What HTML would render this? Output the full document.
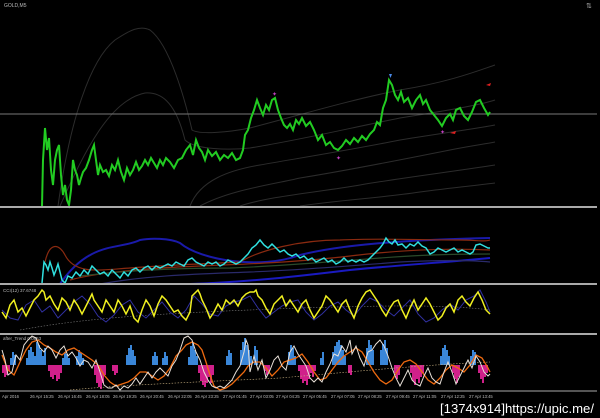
<!DOCTYPE html>
<html><head><meta charset="utf-8"><style>
html,body{margin:0;padding:0;background:#000;width:600px;height:418px;overflow:hidden}
svg{display:block}
text{font-family:"Liberation Sans",sans-serif}
</style></head><body>
<svg width="600" height="418" viewBox="0 0 600 418" xmlns="http://www.w3.org/2000/svg">
<rect width="600" height="418" fill="#000"/>
<text x="4" y="7" font-size="5" fill="#bbb">GOLD,M5</text>
<text x="586" y="8" font-size="7" fill="#aaa">⇅</text>
<g fill="none" stroke="#2c2c2c" stroke-width="1">
<path d="M58,206 C70,120 90,60 115,40 C130,30 140,25 150,30 C170,45 185,100 192,130 C200,135 230,132 250,128 C300,115 350,100 400,90 C450,82 480,70 495,65"/>
<path d="M60,206 C85,150 110,100 145,93 C160,92 175,100 185,140 C195,150 230,150 250,148 C300,140 350,128 400,118 C450,110 480,105 495,100"/>
<path d="M190,206 C200,180 230,170 260,165 C300,158 350,150 400,140 C450,132 480,128 495,125"/>
<path d="M200,206 C230,190 270,185 300,178 C350,170 400,160 450,150 C470,146 485,144 495,142"/>
<path d="M240,206 C270,196 320,192 360,185 C400,178 450,172 495,165"/>
<path d="M300,206 C340,200 380,198 420,192 C450,188 480,185 495,183"/>
</g>
<line x1="0" y1="114" x2="597" y2="114" stroke="#777" stroke-width="1"/>
<polyline fill="none" stroke="#22cc22" stroke-width="2" points="42,206 43,160 45,128 47,150 49,138 51,170 53,185 55,160 57,150 59,145 61,175 63,195 65,185 67,200 69,205 71,190 73,160 75,170 77,175 79,185 81,178 83,172 86,168 89,160 92,150 94,145 96,160 98,175 100,165 103,172 106,170 109,176 112,165 115,170 118,160 121,172 124,180 127,168 130,175 133,170 136,162 139,170 142,166 145,160 148,165 151,158 154,163 157,168 160,160 163,165 166,158 170,162 174,168 178,160 182,158 186,150 190,145 193,155 196,140 199,148 202,152 205,160 208,150 212,156 216,152 220,160 224,155 228,158 232,153 236,160 240,158 243,150 245,135 248,130 251,118 254,110 257,100 260,108 263,115 266,105 269,110 272,100 275,98 278,110 281,118 284,125 287,128 290,124 293,130 296,120 299,124 302,118 306,126 310,122 314,130 318,140 322,135 326,145 330,142 334,148 338,150 342,146 346,140 350,144 354,138 358,142 362,136 366,140 370,134 374,130 377,122 380,125 383,108 386,100 389,80 392,85 395,95 398,100 401,92 404,102 408,98 412,108 416,100 420,95 423,104 426,100 430,110 434,115 438,120 442,126 446,118 450,114 453,120 456,110 460,108 464,116 468,120 472,112 476,102 480,100 484,108 488,115 490,112"/>
<text x="272" y="96" font-size="6" fill="#c040c0">✦</text>
<text x="336" y="160" font-size="6" fill="#c040c0">✦</text>
<text x="440" y="134" font-size="6" fill="#c040c0">✦</text>
<path d="M389,74 l3,0 -1.5,4z" fill="#4a8ae8"/>
<path d="M486,85 l5,-2 -1,3z" fill="#e02020"/>
<path d="M450,133 l6,-2 -1,3z" fill="#e02020"/>
<line x1="0" y1="207" x2="597" y2="207" stroke="#aaa" stroke-width="2"/>
<g fill="none" stroke-width="1.2">
<path d="M60,284 C90,240 120,250 140,240 C150,238 170,238 180,243 C200,260 260,270 300,255 C340,245 400,240 490,238" stroke="#1a1aaa" stroke-width="2"/>
<path d="M190,284 C250,282 300,276 350,270 C400,265 450,262 490,258" stroke="#1a1ac0" stroke-width="2"/>
<path d="M45,262 C50,240 60,245 65,255 C75,275 100,270 130,268 C170,265 200,264 240,262 C260,250 300,240 340,240 C380,238 420,240 460,240 C475,240 485,242 490,240" stroke="#8a2a10"/>
<path d="M70,280 C100,272 150,268 200,266 C250,264 300,262 350,256 C400,250 450,248 490,250" stroke="#8a2a10"/>
<path d="M80,276 C130,270 180,268 230,268 C280,266 330,262 380,258 C430,254 470,254 490,254" stroke="#2a4a2a"/>
<path d="M100,284 C150,275 200,274 250,272 C300,270 350,266 400,262 C440,260 470,260 490,262" stroke="#2a2a6a"/>
</g>
<polyline fill="none" stroke="#30e0e0" stroke-width="1.5" points="42,283 44,262 46,265 48,270 50,262 52,268 54,275 56,270 58,264 60,272 62,280 65,283 68,276 72,278 76,272 80,276 84,270 88,274 92,266 96,270 100,274 104,272 108,276 112,270 116,274 120,278 124,272 128,276 132,270 136,268 140,272 144,268 148,266 152,270 156,266 160,268 164,266 168,264 172,266 176,262 180,264 184,266 188,260 192,258 196,262 200,264 204,266 208,262 212,264 216,262 220,266 224,264 228,260 232,262 236,264 240,262 244,258 248,254 252,248 256,245 260,240 264,245 268,248 272,244 276,248 280,252 284,250 288,254 292,256 296,254 300,258 304,256 308,260 312,258 316,262 320,260 324,258 328,262 332,260 336,264 340,262 344,258 348,262 352,260 356,262 360,260 364,262 368,260 372,256 376,252 380,248 383,244 386,238 389,242 392,244 395,240 398,245 402,244 406,248 410,244 414,246 418,242 422,246 426,248 430,254 434,252 438,248 442,250 446,252 450,250 454,248 458,252 462,250 466,252 470,254 473,252 476,245 480,244 484,246 488,248 490,248"/>
<line x1="0" y1="284" x2="597" y2="284" stroke="#aaa" stroke-width="2"/>
<text x="3" y="292" font-size="4.5" fill="#bbb">CCI(12) 37.6748</text>
<path d="M20,330 C100,315 200,312 300,308 C400,305 450,305 490,310" fill="none" stroke="#777" stroke-width="0.6" stroke-dasharray="1.5,1.5"/>
<polyline fill="none" stroke="#3030a0" stroke-width="1" points="2,310 10,318 18,320 26,305 34,300 42,312 50,306 58,318 66,310 74,302 82,296 90,304 98,316 106,322 114,315 122,305 130,300 138,312 146,318 154,310 162,302 170,312 178,318 186,310 194,296 202,304 210,314 218,316 226,306 234,302 242,300 250,296 258,308 266,318 274,312 282,306 290,302 298,300 306,312 314,320 322,314 330,306 338,302 346,310 354,316 362,306 370,298 378,302 386,310 394,316 402,308 410,300 418,314 426,322 434,318 442,310 450,304 458,310 466,300 474,296 480,290 486,302 490,312"/>
<polyline fill="none" stroke="#f0f020" stroke-width="1.5" points="2,312 6,318 10,305 14,300 18,312 22,308 26,316 30,308 34,300 38,296 42,290 44,292 46,300 50,296 54,304 58,310 62,298 66,302 70,310 74,300 78,306 82,314 86,306 90,298 92,294 94,300 98,306 102,312 106,300 110,306 114,312 118,300 122,306 126,314 130,306 134,318 138,322 142,310 146,300 150,306 154,316 158,304 162,296 166,300 170,306 174,312 178,310 182,316 186,320 190,312 192,296 196,292 198,290 200,294 202,300 206,308 210,318 214,312 218,304 222,310 226,300 230,304 234,300 238,306 242,298 246,294 250,292 254,292 256,290 258,296 262,300 266,308 270,314 274,304 278,300 282,296 286,306 290,300 294,306 298,312 302,304 306,300 310,310 314,318 318,312 322,306 326,296 330,300 334,306 338,312 342,304 346,300 350,310 354,318 358,306 362,298 366,292 370,290 374,296 378,302 382,310 386,316 390,308 394,302 398,300 402,310 406,318 410,308 414,300 418,310 422,304 426,298 430,304 434,312 438,320 442,316 446,308 450,304 454,312 458,300 462,296 466,302 470,306 474,298 478,292 482,300 486,310 490,314"/>
<line x1="0" y1="334" x2="597" y2="334" stroke="#aaa" stroke-width="2"/>
<text x="3" y="340" font-size="4.5" fill="#bbb">after_Trend 0.0853</text>
<g fill="#3a86d8">
<rect x="10" y="358" width="2" height="7"/><rect x="12" y="352" width="2" height="13"/><rect x="14" y="355" width="2" height="10"/><rect x="26" y="358" width="2" height="7"/><rect x="28" y="350" width="2" height="15"/><rect x="30" y="347" width="2" height="18"/><rect x="32" y="352" width="2" height="13"/><rect x="34" y="356" width="2" height="9"/>
<rect x="36" y="342" width="2" height="23"/><rect x="38" y="345" width="2" height="20"/><rect x="40" y="350" width="2" height="15"/><rect x="42" y="356" width="2" height="9"/><rect x="44" y="348" width="2" height="17"/>
<rect x="62" y="358" width="2" height="7"/><rect x="64" y="352" width="2" height="13"/><rect x="66" y="354" width="2" height="11"/><rect x="68" y="358" width="2" height="7"/>
<rect x="76" y="356" width="2" height="9"/><rect x="78" y="350" width="2" height="15"/><rect x="80" y="353" width="2" height="12"/><rect x="82" y="358" width="2" height="7"/>
<rect x="126" y="355" width="2" height="10"/><rect x="128" y="348" width="2" height="17"/><rect x="130" y="345" width="2" height="20"/><rect x="132" y="350" width="2" height="15"/><rect x="134" y="356" width="2" height="9"/>
<rect x="152" y="356" width="2" height="9"/><rect x="154" y="352" width="2" height="13"/><rect x="156" y="356" width="2" height="9"/>
<rect x="162" y="358" width="2" height="7"/><rect x="164" y="352" width="2" height="13"/><rect x="166" y="356" width="2" height="9"/>
<rect x="188" y="357" width="2" height="8"/><rect x="190" y="346" width="2" height="19"/><rect x="192" y="342" width="2" height="23"/><rect x="194" y="350" width="2" height="15"/><rect x="196" y="356" width="2" height="9"/>
<rect x="226" y="356" width="2" height="9"/><rect x="228" y="350" width="2" height="15"/><rect x="230" y="353" width="2" height="12"/>
<rect x="240" y="350" width="2" height="15"/><rect x="242" y="342" width="2" height="23"/><rect x="244" y="338" width="2" height="27"/><rect x="246" y="345" width="2" height="20"/><rect x="248" y="350" width="2" height="15"/><rect x="250" y="356" width="2" height="9"/>
<rect x="254" y="346" width="2" height="19"/><rect x="256" y="350" width="2" height="15"/>
<rect x="288" y="352" width="2" height="13"/><rect x="290" y="345" width="2" height="20"/><rect x="292" y="348" width="2" height="17"/><rect x="294" y="356" width="2" height="9"/>
<rect x="320" y="358" width="2" height="7"/><rect x="322" y="352" width="2" height="13"/>
<rect x="332" y="352" width="2" height="13"/><rect x="334" y="346" width="2" height="19"/><rect x="336" y="342" width="2" height="23"/><rect x="338" y="340" width="2" height="25"/><rect x="340" y="345" width="2" height="20"/><rect x="342" y="350" width="2" height="15"/><rect x="344" y="356" width="2" height="9"/>
<rect x="366" y="348" width="2" height="17"/><rect x="368" y="340" width="2" height="25"/><rect x="370" y="345" width="2" height="20"/><rect x="372" y="350" width="2" height="15"/>
<rect x="380" y="350" width="2" height="15"/><rect x="382" y="344" width="2" height="21"/><rect x="384" y="340" width="2" height="25"/><rect x="386" y="348" width="2" height="17"/>
<rect x="440" y="356" width="2" height="9"/><rect x="442" y="348" width="2" height="17"/><rect x="444" y="345" width="2" height="20"/><rect x="446" y="350" width="2" height="15"/><rect x="448" y="356" width="2" height="9"/>
<rect x="470" y="356" width="2" height="9"/><rect x="472" y="350" width="2" height="15"/><rect x="474" y="352" width="2" height="13"/>
</g>
<g fill="#d0208a">
<rect x="2" y="365" width="2" height="8"/><rect x="4" y="365" width="2" height="12"/><rect x="6" y="365" width="2" height="10"/><rect x="8" y="365" width="2" height="6"/>
<rect x="48" y="365" width="2" height="6"/><rect x="50" y="365" width="2" height="12"/><rect x="52" y="365" width="2" height="14"/><rect x="54" y="365" width="2" height="10"/><rect x="56" y="365" width="2" height="16"/><rect x="58" y="365" width="2" height="14"/><rect x="60" y="365" width="2" height="8"/>
<rect x="94" y="365" width="2" height="10"/><rect x="96" y="365" width="2" height="18"/><rect x="98" y="365" width="2" height="22"/><rect x="100" y="365" width="2" height="24"/><rect x="102" y="365" width="2" height="18"/><rect x="104" y="365" width="2" height="10"/>
<rect x="112" y="365" width="2" height="6"/><rect x="114" y="365" width="2" height="10"/><rect x="116" y="365" width="2" height="8"/>
<rect x="198" y="365" width="2" height="8"/><rect x="200" y="365" width="2" height="16"/><rect x="202" y="365" width="2" height="20"/><rect x="204" y="365" width="2" height="22"/><rect x="206" y="365" width="2" height="18"/><rect x="208" y="365" width="2" height="12"/><rect x="210" y="365" width="2" height="18"/><rect x="212" y="365" width="2" height="10"/>
<rect x="264" y="365" width="2" height="6"/><rect x="266" y="365" width="2" height="10"/><rect x="268" y="365" width="2" height="6"/>
<rect x="298" y="365" width="2" height="6"/><rect x="300" y="365" width="2" height="14"/><rect x="302" y="365" width="2" height="18"/><rect x="304" y="365" width="2" height="16"/><rect x="306" y="365" width="2" height="20"/><rect x="308" y="365" width="2" height="14"/><rect x="310" y="365" width="2" height="8"/><rect x="312" y="365" width="2" height="12"/><rect x="314" y="365" width="2" height="6"/>
<rect x="348" y="365" width="2" height="8"/><rect x="350" y="365" width="2" height="10"/>
<rect x="394" y="365" width="2" height="8"/><rect x="396" y="365" width="2" height="14"/><rect x="398" y="365" width="2" height="10"/>
<rect x="410" y="365" width="2" height="8"/><rect x="412" y="365" width="2" height="16"/><rect x="414" y="365" width="2" height="20"/><rect x="416" y="365" width="2" height="14"/><rect x="418" y="365" width="2" height="18"/><rect x="420" y="365" width="2" height="12"/><rect x="422" y="365" width="2" height="8"/>
<rect x="452" y="365" width="2" height="8"/><rect x="454" y="365" width="2" height="14"/><rect x="456" y="365" width="2" height="18"/><rect x="458" y="365" width="2" height="12"/>
<rect x="478" y="365" width="2" height="8"/><rect x="480" y="365" width="2" height="14"/><rect x="482" y="365" width="2" height="18"/><rect x="484" y="365" width="2" height="12"/><rect x="486" y="365" width="2" height="8"/>
</g>
<path d="M70,390 C120,385 200,382 280,378 C350,372 420,365 490,362" fill="none" stroke="#c8b080" stroke-width="0.6" stroke-dasharray="1.5,1.5"/>
<polyline fill="none" stroke="#ee6a10" stroke-width="1.3" points="2,355 8,370 14,375 20,362 26,350 32,342 38,340 44,345 50,348 56,352 62,355 68,350 74,348 80,352 86,356 92,360 98,365 104,375 110,382 116,386 122,384 128,382 134,378 140,372 146,372 152,376 158,380 164,376 170,368 176,356 182,350 186,345 192,342 198,345 202,350 206,362 210,375 214,386 220,390 226,388 232,384 238,378 244,372 248,366 254,362 260,362 266,368 272,376 278,370 284,362 290,360 296,358 302,354 308,362 314,372 320,380 326,378 332,370 338,362 344,356 350,352 356,348 362,352 368,362 374,372 380,380 386,384 392,380 398,370 404,362 410,360 416,364 422,372 428,380 434,384 440,378 446,370 452,365 458,368 464,372 470,365 476,355 482,358 488,368 490,372"/>
<polyline fill="none" stroke="#e8e0d8" stroke-width="1" points="2,350 5,360 8,375 12,372 16,355 20,360 24,345 28,340 32,336 36,338 40,348 44,352 48,346 52,350 56,358 60,350 64,346 68,356 72,352 76,358 80,366 84,360 88,362 92,368 96,360 100,372 104,385 108,388 112,388 116,385 120,390 124,386 128,388 132,384 136,378 140,384 144,378 148,372 152,378 156,372 160,368 164,372 168,376 172,366 176,360 180,350 184,338 188,336 192,340 196,352 200,360 204,372 208,380 212,386 216,388 220,386 224,388 228,384 232,380 236,372 240,366 244,352 246,340 248,345 250,372 254,356 258,370 262,360 266,378 270,370 274,360 278,356 282,366 286,370 290,352 294,346 298,354 302,360 306,366 310,378 314,382 318,378 322,382 326,372 330,364 334,354 338,356 342,346 346,352 350,340 352,354 356,346 360,358 364,366 368,352 372,350 376,344 380,340 384,346 388,356 392,368 396,378 400,386 404,378 408,370 412,380 416,384 420,386 424,376 428,368 432,378 436,382 440,384 444,372 448,362 452,372 456,384 460,376 464,368 468,360 472,368 476,356 480,362 484,372 488,376 490,374"/>
<line x1="0" y1="391" x2="597" y2="391" stroke="#aaa" stroke-width="1"/>
<g font-size="4.2" fill="#bbb">
<text x="2" y="398">Apr 2016</text>
<text x="30" y="398">26 Apr 15:25</text>
<text x="58" y="398">26 Apr 16:45</text>
<text x="86" y="398">26 Apr 18:05</text>
<text x="113" y="398">26 Apr 19:25</text>
<text x="140" y="398">26 Apr 20:45</text>
<text x="168" y="398">26 Apr 22:05</text>
<text x="195" y="398">26 Apr 23:25</text>
<text x="223" y="398">27 Apr 01:45</text>
<text x="250" y="398">27 Apr 03:05</text>
<text x="276" y="398">27 Apr 04:25</text>
<text x="303" y="398">27 Apr 05:45</text>
<text x="331" y="398">27 Apr 07:05</text>
<text x="358" y="398">27 Apr 08:25</text>
<text x="386" y="398">27 Apr 09:45</text>
<text x="413" y="398">27 Apr 11:05</text>
<text x="441" y="398">27 Apr 12:25</text>
<text x="469" y="398">27 Apr 13:45</text>
</g>
<text x="440" y="413" font-size="13" fill="#fff" font-family="Liberation Mono,monospace" textLength="154" lengthAdjust="spacingAndGlyphs">[1374x914]https://upic.me/</text>
</svg>
</body></html>
